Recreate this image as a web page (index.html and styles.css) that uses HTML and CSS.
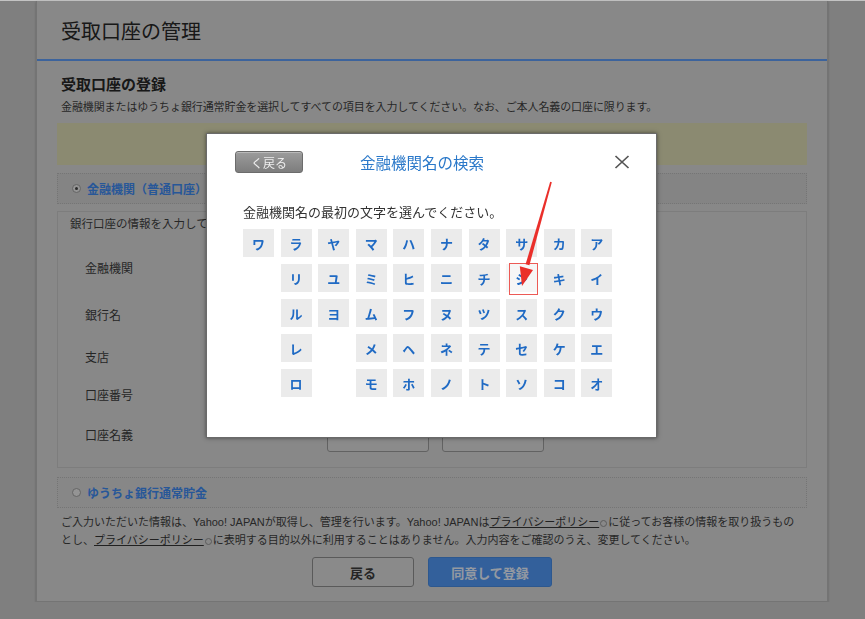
FILE: index.html
```html
<!DOCTYPE html>
<html lang="ja">
<head>
    <meta charset="UTF-8">
    <meta name="viewport" content="width=device-width, initial-scale=1.0">
    <title>受取口座の管理</title>
    <link rel="stylesheet" href="styles.css">
</head>
<body>
    <div class="page">
        <div class="page-header">
            <h1>受取口座の管理</h1>
        </div>
        <div class="page-body">
            <h2>受取口座の登録</h2>
            <p class="lead">金融機関またはゆうちょ銀行通常貯金を選択してすべての項目を入力してください。なお、ご本人名義の口座に限ります。</p>
            <div class="notice"></div>
            <div class="choice choice-on">
                <span class="radio radio-on"></span>
                <span class="choice-label">金融機関（普通口座）</span>
            </div>
            <div class="bank-form">
                <p class="bank-intro">銀行口座の情報を入力してください。</p>
                <div class="fields">
                    <div class="field"><span class="field-label">金融機関</span><span class="field-input wide"></span></div>
                    <div class="field"><span class="field-label">銀行名</span><span class="field-input wide"></span></div>
                    <div class="field"><span class="field-label">支店</span><span class="field-input wide"></span></div>
                    <div class="field"><span class="field-label">口座番号</span><span class="field-input wide"></span></div>
                    <div class="field"><span class="field-label">口座名義</span><span class="field-input half"></span><span class="field-input half"></span></div>
                </div>
            </div>
            <div class="choice">
                <span class="radio"></span>
                <span class="choice-label">ゆうちょ銀行通常貯金</span>
            </div>
            <p class="terms">ご入力いただいた情報は、Yahoo! JAPANが取得し、管理を行います。Yahoo! JAPANは<a href="#">プライバシーポリシー</a><span class="ext"></span>に従ってお客様の情報を取り扱うもの<br>とし、<a href="#">プライバシーポリシー</a><span class="ext"></span>に表明する目的以外に利用することはありません。入力内容をご確認のうえ、変更してください。</p>
            <div class="actions">
                <button class="btn btn-back">戻る</button>
                <button class="btn btn-submit">同意して登録</button>
            </div>
        </div>
    </div>

    <div class="overlay"></div>

    <div class="modal">
        <div class="modal-head">
            <button class="modal-back">く戻る</button>
            <h3 class="modal-title">金融機関名の検索</h3>
            <button class="modal-close" aria-label="閉じる">
                <svg width="16" height="16" viewBox="0 0 16 16"><path d="M1.5 2 L14.5 14 M14.5 2 L1.5 14" stroke="#555" stroke-width="1.7" fill="none"/></svg>
            </button>
        </div>
        <p class="modal-lead">金融機関名の最初の文字を選んでください。</p>
        <div class="kana-grid" id="kanaGrid"></div>
    </div>

    <!-- red marker drawn over the screenshot -->
    <svg class="annotation" width="865" height="619" viewBox="0 0 865 619">
        <rect x="509.5" y="263.5" width="28" height="31" fill="none" stroke="#ec5a55" stroke-width="1"/>
        <polygon points="551.8,182.2 550.2,181.8 525.6,264.3 529.4,265.3" fill="#ea2f2a"/>
        <polygon points="522,286 519.8,266.2 533,270.1" fill="#ea2f2a"/>
    </svg>

    <script>
        const kanaGrid = document.getElementById('kanaGrid');
        const columns = ['ワ', 'ラリルレロ', 'ヤユヨ', 'マミムメモ', 'ハヒフヘホ', 'ナニヌネノ', 'タチツテト', 'サシスセソ', 'カキクケコ', 'アイウエオ'];

        for (let row = 0; row < 5; row++) {
            columns.forEach(col => {
                const ch = col[row];
                if (!ch) {
                    kanaGrid.appendChild(document.createElement('span'));
                    return;
                }
                const key = document.createElement('button');
                key.className = 'key';
                if (ch === 'シ') key.classList.add('key-picked');
                key.textContent = ch;
                kanaGrid.appendChild(key);
            });
        }
    </script>
</body>
</html>
```

FILE: styles.css
```css
* {
    box-sizing: border-box;
}
body {
    margin: 0;
    background: #c3c3c3;
    font-family: "Liberation Sans", "Noto Sans CJK JP", sans-serif;
    color: #3c3c3c;
}
button {
    font-family: inherit;
    cursor: pointer;
}

/* page behind the dialog */
.page {
    width: 792px;
    margin: 1px 0 0 36px;
    background: #d2d2d2;
    border: 1px solid #b3b3b3;
    border-top: 0;
    box-shadow: 0 1px 2px rgba(0, 0, 0, 0.25);
}
.page-header {
    height: 60px;
    padding-left: 24px;
    display: flex;
    align-items: center;
    border-bottom: 2px solid #5c98f0;
}
.page-header h1 {
    margin: 0;
    font-size: 20px;
    font-weight: normal;
    color: #262626;
}
.page-body {
    padding: 14px 20px 14px 20px;
}
.page-body h2 {
    margin: 0;
    padding-left: 4px;
    font-size: 15px;
    line-height: 20px;
    color: #262626;
}
.lead {
    margin: 4px 0 0;
    padding-left: 4px;
    font-size: 11px;
    line-height: 16px;
    letter-spacing: -0.1px;
}
.notice {
    margin-top: 8px;
    height: 42px;
    background: #d6d4ae;
}
.choice {
    margin-top: 8px;
    height: 31px;
    display: flex;
    align-items: center;
    gap: 6px;
    padding-left: 14px;
    border: 1px dotted #b4b4b4;
    background: #cbcbcb;
}
.choice + .terms {
    margin-top: 5px;
}
.bank-form + .choice {
    margin-top: 9px;
    background: #d0d0d0;
}
.radio {
    width: 9px;
    height: 9px;
    border-radius: 50%;
    border: 1px solid #9a9a9a;
    background: #e4e4e4;
    position: relative;
}
.radio-on::after {
    content: "";
    position: absolute;
    left: 2px;
    top: 2px;
    width: 3px;
    height: 3px;
    border-radius: 50%;
    background: #444;
}
.choice-label {
    font-size: 12px;
    font-weight: bold;
    color: #3d86ea;
}
.bank-form {
    margin-top: 7px;
    border: 1px solid #c0c0c0;
    padding: 5px 0 13px 12px;
}
.bank-intro {
    margin: 0;
    font-size: 11.5px;
    line-height: 14px;
}
.fields {
    margin-top: 13px;
}
.field {
    display: flex;
    align-items: center;
    gap: 13px;
    padding-left: 15px;
    height: 40px;
}
.field:nth-child(1) { height: 46px; }
.field:nth-child(2) { height: 48px; }
.field:nth-child(3) { height: 36px; }
.field:last-child .field-input {
    margin-top: 10px;
}
.field-label {
    width: 229px;
    font-size: 12px;
    color: #3a3a3a;
}
.field-input {
    height: 26px;
    border: 1px solid #979797;
    border-radius: 3px;
    background: #d6d6d6;
}
.field-input.wide { width: 217px; }
.field-input.half { width: 102px; }
.terms {
    width: 744px;
    margin: 5px 0 0;
    padding-left: 4px;
    font-size: 11px;
    line-height: 18px;
}
.terms a {
    color: #333;
}
.ext {
    display: inline-block;
    width: 7px;
    height: 7px;
    margin: 0 1px;
    border: 1px solid #8d8d8d;
    border-radius: 50%;
    vertical-align: middle;
}
.actions {
    margin-top: 8px;
    display: flex;
    justify-content: center;
    gap: 14px;
}
.btn {
    height: 30px;
    border-radius: 3px;
    font-size: 13px;
    font-weight: bold;
}
.btn-back {
    width: 102px;
    background: #d5d5d5;
    border: 1px solid #8a8a8a;
    color: #3a3a3a;
}
.btn-submit {
    width: 124px;
    background: #4f94ee;
    border: 1px solid #4688dc;
    color: #e4ecf8;
}

/* dialog */
.overlay {
    position: fixed;
    top: 1px;
    left: 0;
    right: 0;
    bottom: 0;
    background: rgba(0, 0, 0, 0.35);
}
.modal {
    position: absolute;
    left: 206px;
    top: 133px;
    width: 451px;
    height: 305px;
    background: #fff;
    border: 1px solid #6a6a6a;
    box-shadow: 0 0 4px rgba(0, 0, 0, 0.5);
}
.modal-head {
    display: flex;
    align-items: center;
    padding: 17px 26px 0 28px;
}
.modal-back {
    width: 68px;
    height: 22px;
    padding: 0;
    border: 1px solid #6c6c6c;
    border-radius: 3px;
    background: linear-gradient(#9c9c9c, #7d7d7d);
    box-shadow: inset 0 1px 0 rgba(255, 255, 255, 0.3);
    color: #eee;
    font-size: 12px;
}
.modal-title {
    margin: 0 0 0 57px;
    font-size: 15.5px;
    font-weight: normal;
    color: #2a78c9;
}
.modal-close {
    margin-left: auto;
    padding: 0;
    border: 0;
    background: none;
    display: flex;
}
.modal-lead {
    margin: 31px 0 0 36px;
    font-size: 13px;
    line-height: 18px;
    color: #333;
}
.kana-grid {
    margin: 7px 0 0 36px;
    display: grid;
    grid-template-columns: repeat(10, 31px);
    grid-auto-rows: 28px;
    column-gap: 6.6px;
    row-gap: 7px;
}
.key {
    padding: 0;
    border: 0;
    background: #ebebeb;
    color: #1f6ac4;
    font-size: 13px;
    font-weight: bold;
}
.key:hover {
    background: #e0e0e0;
}
.key-picked {
    background: #f6f6f6;
}
.annotation {
    position: absolute;
    left: 0;
    top: 0;
    pointer-events: none;
}
```
